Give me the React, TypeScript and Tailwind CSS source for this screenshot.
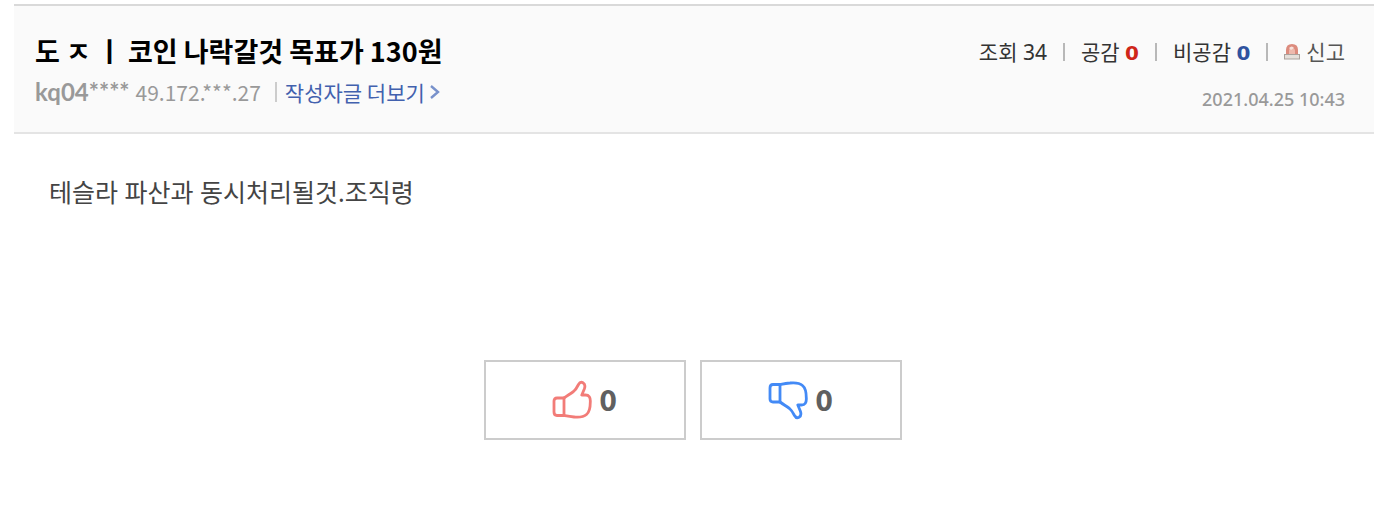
import type { ReactNode } from "react";

const latin = "font-['Noto_Sans','Noto_Sans_CJK_KR',sans-serif]";
const korean = "font-['Noto_Sans_CJK_KR',sans-serif]";

function Divider() {
  return <span aria-hidden="true" className="h-[18px] w-[2px] bg-[#b8b8b8]" />;
}

function Thumb({ className }: { className: string }) {
  return (
    <svg viewBox="0 0 40 40" fill="none" stroke="currentColor" strokeWidth="2.8" strokeLinecap="round" strokeLinejoin="round" aria-hidden="true" className={className}>
      <path d="M12 18H5Q2 18 2 21V32Q2 35.500 5 35.500H12Z" />
      <path d="M12 18C15 15.800 18 14 21.500 11.500C24 9.500 25 7.500 26.500 4.500C27.700 2.300 29.200 1.800 31 2.700C33.200 4 33.400 6 32.300 9L29.800 15H33.500C37 15 38.600 17.500 38.300 22C38.300 28 37 32.500 34.500 34.500C32 36.700 27 37.500 22 37C17.500 36.700 14.500 36 12 35.500" />
    </svg>
  );
}

function VoteButton({ label, count, children }: { label: string; count: number; children: ReactNode }) {
  return (
    <button type="button" aria-label={`${label} ${count}`} className="flex h-20 w-[202px] items-center justify-center gap-2 border-2 border-[#cccccc] bg-white pr-[2px]">
      {children}
      <span className="font-['Lato',sans-serif] text-[28px] leading-8 font-extrabold text-[#606060]">{count}</span>
    </button>
  );
}

export default function App() {
  return (
    <main className={`${latin} bg-white pt-1 pr-4 pb-16 pl-[14px]`}>
      <article>
        <header className="flex justify-between border-y-2 border-t-[#d9d9d9] border-b-[#e4e4e4] bg-[#fafafa] pt-7 pr-[29px] pb-[15px] pl-[21px]">
          <div>
            <h1 className={`${korean} text-[27px] leading-[34px] font-bold text-black`}>도 ㅈ ㅣ 코인 나락갈것 목표가 130원</h1>
            <div className={`${korean} mt-[6px] flex items-center text-[21px] leading-9 text-[#999999]`}>
              <strong className="font-['Lato',sans-serif] text-[24px] font-bold">kq04****</strong>
              <span className="ml-[6px]">49.172.***.27</span>
              <span aria-hidden="true" className="mr-2 ml-[14px] h-5 w-[2px] bg-[#cccccc]" />
              <a href="#more" className="flex items-center gap-1 text-[#4261ae]">
                작성자글 더보기
                <svg viewBox="0 0 12 16" fill="none" stroke="#7891cb" strokeWidth="2.4" aria-hidden="true" className="h-4 w-3">
                  <path d="M2 2L9 8L2 14" />
                </svg>
              </a>
            </div>
          </div>
          <div className="flex flex-col items-end">
            <div className="flex items-center gap-4 text-[21px] leading-9 text-[#333333]">
              <span>조회 34</span>
              <Divider />
              <span>공감 <strong className="font-['DejaVu_Sans',sans-serif] text-[20px] leading-none font-bold text-[#cf2618]">0</strong></span>
              <Divider />
              <span>비공감 <strong className="font-['DejaVu_Sans',sans-serif] text-[20px] leading-none font-bold text-[#2f529f]">0</strong></span>
              <Divider />
              <a href="#report" className="flex items-center gap-[6px] text-[#555555]">
                <svg viewBox="0 0 16 16" aria-hidden="true" className="size-4">
                  <path d="M2 11V6Q2 0 8 0T14 6V11Z" fill="#dc8b7d" />
                  <path d="M5 10V7Q5 4 8 4T11 7V10Z" fill="#edb9ad" />
                  <path d="M5 4Q8 1 10 4L7 6Z" fill="#f7e2dc" />
                  <rect x="0.500" y="10.500" width="15" height="4.500" fill="#e5dfda" stroke="#aaa29d" />
                </svg>
                신고
              </a>
            </div>
            <time dateTime="2021-04-25T10:43" className="mt-[11px] text-[18px] leading-9 font-medium text-[#999999]">2021.04.25 10:43</time>
          </div>
        </header>
        <p className="px-[35px] pt-10 text-[25px] leading-9 text-[#444444]">테슬라 파산과 동시처리될것.조직령</p>
        <div className="mt-[150px] flex justify-center gap-[14px] pr-[2px]">
          <VoteButton label="공감" count={0}>
            <Thumb className="size-10 text-[#f27c78]" />
          </VoteButton>
          <VoteButton label="비공감" count={0}>
            <Thumb className="size-10 -scale-y-100 text-[#438af6]" />
          </VoteButton>
        </div>
      </article>
    </main>
  );
}
